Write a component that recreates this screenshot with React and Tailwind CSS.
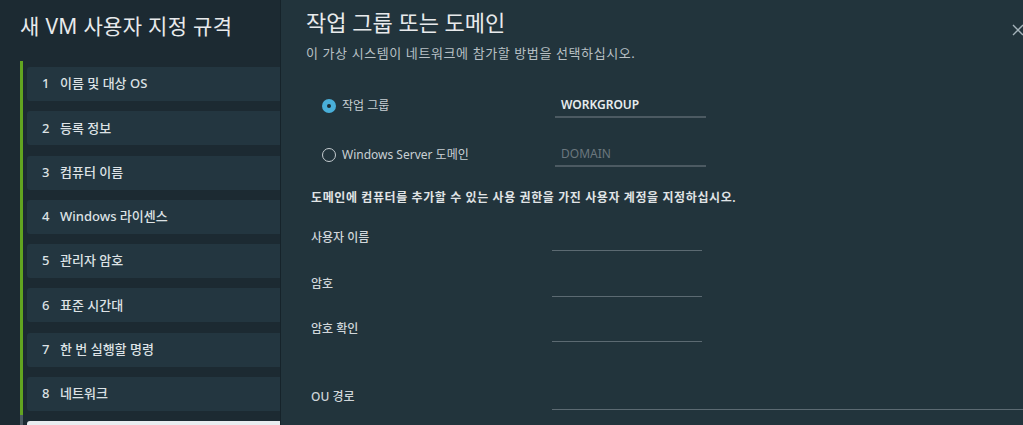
import React from "react";

const steps = [
  { n: 1, label: "이름 및 대상 OS", done: true },
  { n: 2, label: "등록 정보", done: true },
  { n: 3, label: "컴퓨터 이름", done: true },
  { n: 4, label: "Windows 라이센스", done: true },
  { n: 5, label: "관리자 암호", done: true },
  { n: 6, label: "표준 시간대", done: true },
  { n: 7, label: "한 번 실행할 명령", done: true },
  { n: 8, label: "네트워크", done: true },
  // current step, only its top edge is in view
  { n: 9, label: "", active: true },
];

const font = { fontFamily: '"Noto Sans", "Noto Sans CJK KR", sans-serif' };

const StepItem = ({ step }) => {
  const bar = step.done ? "border-[#62a420]" : "border-[#4a5a62]";
  const box = step.active
    ? "bg-[#e9edf0] text-[#1b2a32]"
    : "bg-[#233640] text-[#dde2e5]";
  return (
    <div className={`border-l-[3px] ${bar} pl-[4px] pt-[6px] pb-[4.25px]`}>
      <div className={`flex h-[34px] items-center rounded-l-[3px] pl-[15px] text-[13px] font-medium ${box}`}>
        {step.label && (
          <>
            <span className="w-[18px]">{step.n}</span>
            <span>{step.label}</span>
          </>
        )}
      </div>
    </div>
  );
};

const Radio = ({ checked }) =>
  checked ? (
    <span className="flex h-[14px] w-[14px] items-center justify-center rounded-full bg-[#49afd9]">
      <span className="h-[4px] w-[4px] rounded-full bg-[#1b2a32]" />
    </span>
  ) : (
    <span className="h-[14px] w-[14px] rounded-full border-[1.5px] border-[#c5ccd0]" />
  );

const FieldRow = ({ label, height, wide }) => (
  <div className={`flex items-start ${height}`}>
    <div className="w-[241px] text-[12px] font-medium leading-[16px] text-[#d0d6da]">{label}</div>
    <div className={`${wide ? "flex-1" : "w-[150px]"} h-[21px] border-b border-[#5c6a72]`} />
  </div>
);

export default function App() {
  return (
    <div className="flex h-[425px] w-[1023px] overflow-hidden" style={font}>
      {/* wizard steps */}
      <div className="w-[280px] shrink-0 bg-[#1c2a32] pl-[20px]">
        <h1 className="pt-[12px] text-[21px] leading-[28px] tracking-[0.3px] text-[#e8eaec]">새 VM 사용자 지정 규격</h1>
        <div className="mt-[21px]">
          {steps.map((s) => (
            <StepItem key={s.n} step={s} />
          ))}
        </div>
      </div>

      {/* page content */}
      <div className="flex-1 border-l border-[#16232a] bg-[#22343c] pl-[25px]">
        <div className="flex items-start justify-between">
          <h2 className="pt-[8px] text-[22px] leading-[28px] text-[#e8eaec]">작업 그룹 또는 도메인</h2>
          <svg className="mt-[24px] -mr-[1px]" width="12" height="12" viewBox="0 0 12 12" fill="none">
            <path d="M1 1L11 11M11 1L1 11" stroke="#a5b3ba" strokeWidth="1.4" />
          </svg>
        </div>
        <p className="mt-[8px] text-[13px] leading-[18px] tracking-[0.6px] text-[#b8c0c5]">
          이 가상 시스템이 네트워크에 참가할 방법을 선택하십시오.
        </p>

        <div className="ml-[16px] mt-[31.5px] flex h-[24px] items-center">
          <Radio checked />
          <span className="ml-[6px] w-[213px] text-[12px] text-[#c9d0d4]">작업 그룹</span>
          <div className="flex h-[24px] w-[151px] items-center border-b-2 border-[#4c5a62] pl-[6px] text-[12px] font-semibold text-[#e8ecee]">
            WORKGROUP
          </div>
        </div>
        <div className="ml-[16px] mt-[25px] flex h-[24px] items-center">
          <Radio />
          <span className="ml-[6px] w-[213px] text-[12px] text-[#c9d0d4]">Windows Server 도메인</span>
          <div className="flex h-[24px] w-[151px] items-center border-b-2 border-[#4c5a62] pl-[6px] text-[12px] text-[#6b777e]">
            DOMAIN
          </div>
        </div>

        <div className="pl-[5px]">
          <p className="mt-[23.5px] text-[12px] font-semibold leading-[16px] tracking-[0.6px] text-[#e0e4e6]">
            도메인에 컴퓨터를 추가할 수 있는 사용 권한을 가진 사용자 계정을 지정하십시오.
          </p>
          <div className="mt-[24px]">
            <FieldRow label="사용자 이름" height="h-[46px]" />
            <FieldRow label="암호" height="h-[45px]" />
            <FieldRow label="암호 확인" height="h-[68px]" />
            <FieldRow label="OU 경로" height="h-[40px]" wide />
          </div>
        </div>
      </div>
    </div>
  );
}
